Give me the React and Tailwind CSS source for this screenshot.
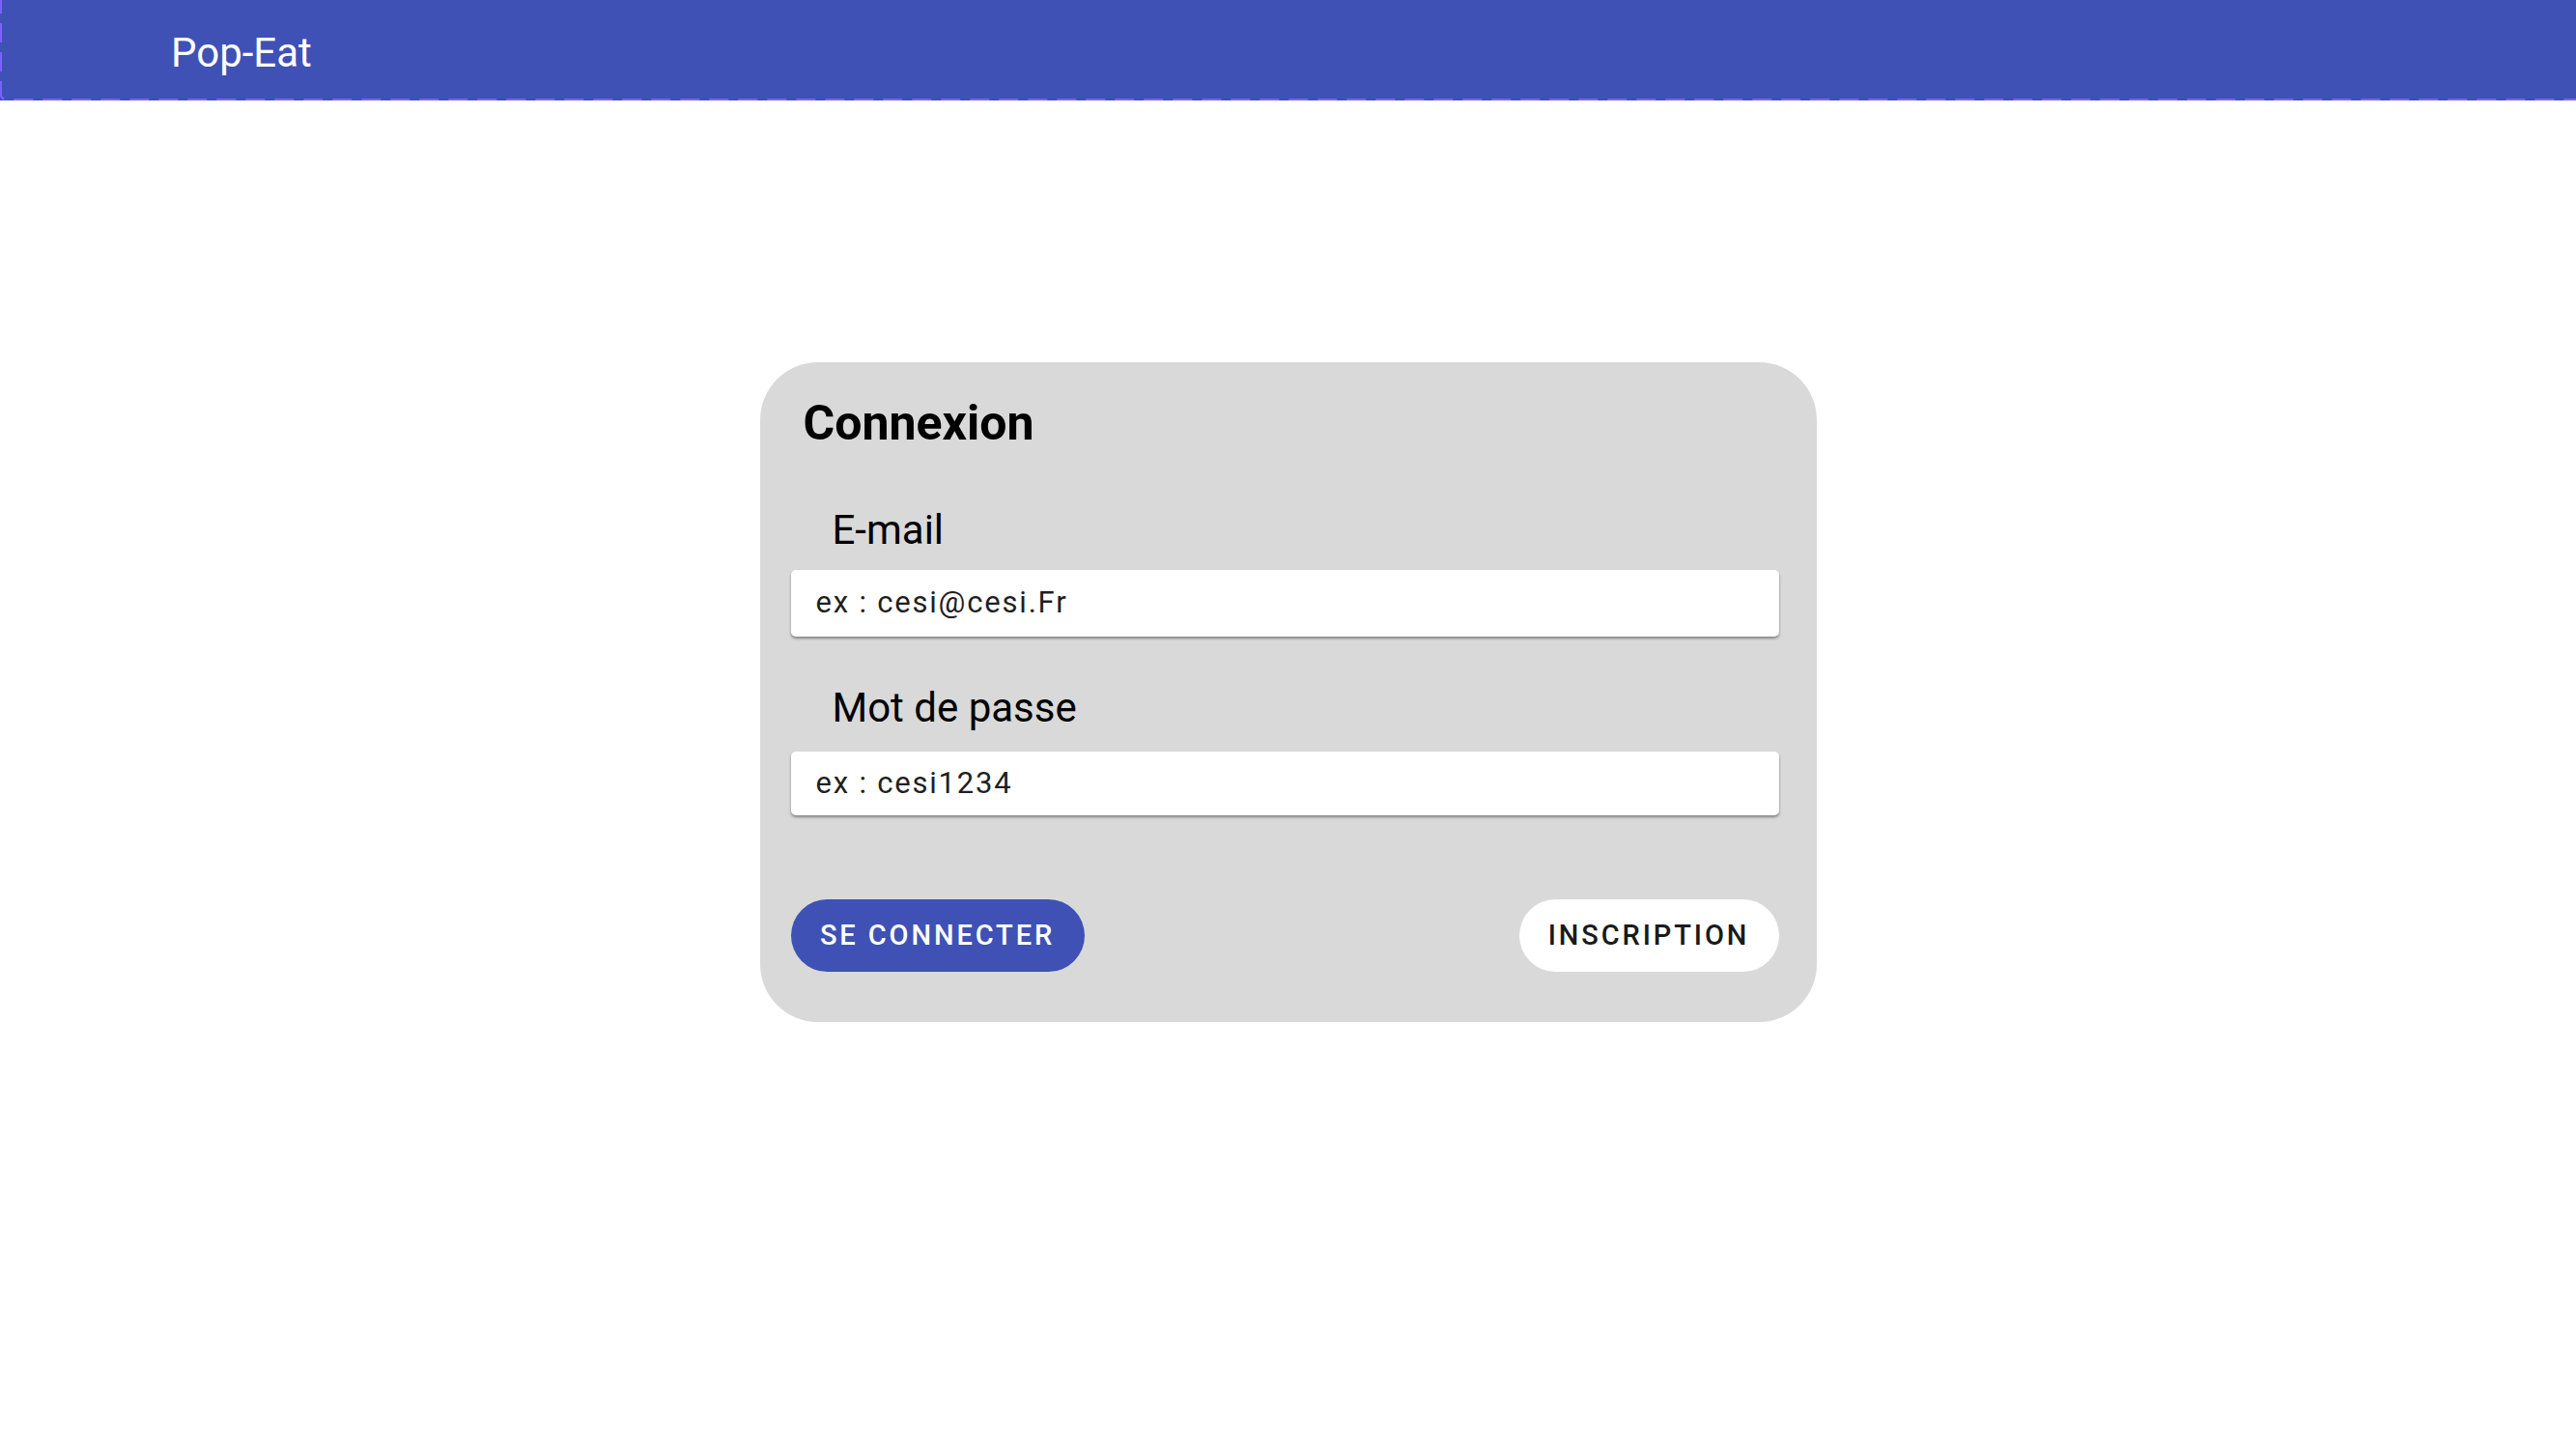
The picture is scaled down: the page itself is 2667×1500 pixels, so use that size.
import React from 'react';

const font = { fontFamily: 'Roboto, "Noto Sans", sans-serif' };

function Field({ label, placeholder, gap, height }) {
  return (
    <div className="flex flex-col">
      <label className="pl-[43px] text-[42px] leading-[42px] text-black">{label}</label>
      <div
        className={`flex items-center rounded-[5px] bg-white pl-[26px] text-[31px] tracking-[1.8px] text-[#1f1f1f] shadow-[0_2px_3px_rgba(0,0,0,0.4)] ${gap} ${height}`}
      >
        {placeholder}
      </div>
    </div>
  );
}

export default function App() {
  return (
    <div className="min-h-screen bg-white" style={font}>
      {/* Top bar */}
      <header className="relative flex h-[104px] items-center bg-[#3f51b5] pl-[177px] pt-[5px]">
        <span className="text-[42px] leading-none text-white">Pop-Eat</span>
        <svg className="pointer-events-none absolute inset-0 h-full w-full" preserveAspectRatio="none">
          <rect x="1" y="-20" width="2720" height="123" rx="5" fill="none" stroke="#7b61ff" strokeWidth="2" strokeDasharray="20 10" />
        </svg>
      </header>

      {/* Login card */}
      <div className="flex justify-center pt-[271px]">
        <div className="flex w-[1094px] flex-col rounded-[60px] bg-[#d9d9d9] pt-[38px] pb-[52px] pl-[32px] pr-[39px]">
          <h1 className="pl-[13px] text-[50px] font-bold leading-[50px] text-black">Connexion</h1>

          <div className="mt-[65px]">
            <Field label="E-mail" placeholder="ex : cesi@cesi.Fr" gap="mt-[20px]" height="h-[69px]" />
          </div>
          <div className="mt-[53px]">
            <Field label="Mot de passe" placeholder="ex : cesi1234" gap="mt-[24px]" height="h-[66px]" />
          </div>

          <div className="mt-[87px] flex items-center justify-between">
            <button className="h-[75px] w-[304px] rounded-full bg-[#3f51b5] text-[29px] font-medium uppercase tracking-[0.1em] text-white">
              Se connecter
            </button>
            <button className="h-[75px] w-[269px] rounded-full bg-white text-[29px] font-medium uppercase tracking-[0.1em] text-[#1a1a1a]">
              Inscription
            </button>
          </div>
        </div>
      </div>
    </div>
  );
}
